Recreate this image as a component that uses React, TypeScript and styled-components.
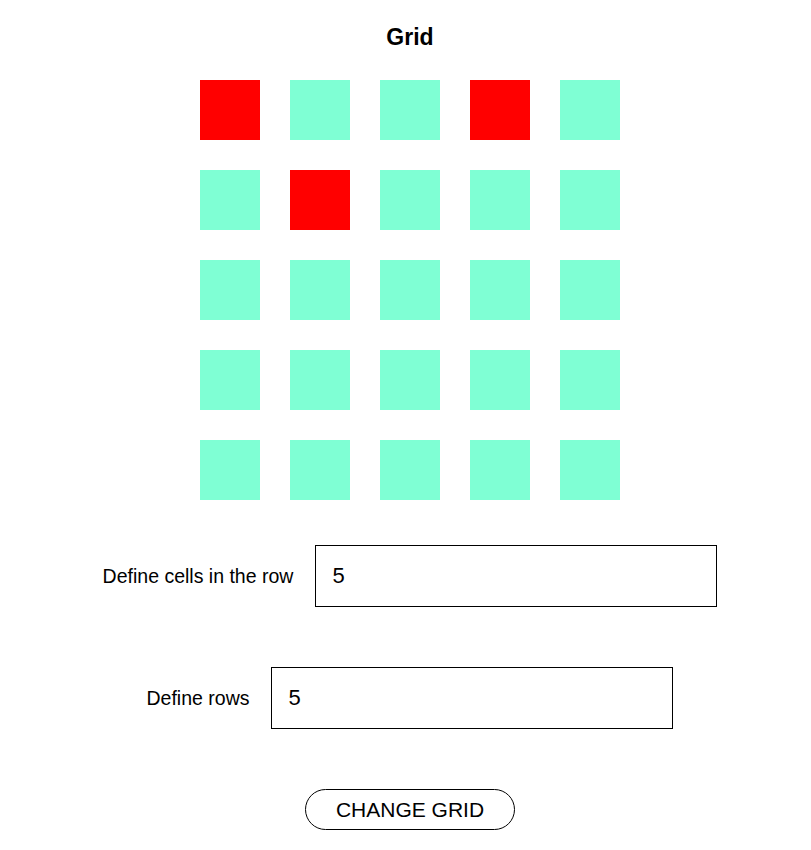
import React, { useState } from "react";
import styled, { createGlobalStyle } from "styled-components";

const Global = createGlobalStyle`
  html, body { margin: 0; padding: 0; background: #fff; }
  body { font-family: "Liberation Sans", Arial, sans-serif; color: #000; }
`;

const Page = styled.div`
  display: flex;
  flex-direction: column;
  align-items: center;
  padding: 24px 0 20px 9px;
  width: 811px;
  box-sizing: border-box;
`;

const Title = styled.h1`
  margin: 0;
  font-size: 23px;
  line-height: 26px;
  font-weight: 700;
`;

const Board = styled.div<{ $cols: number }>`
  display: grid;
  grid-template-columns: repeat(${(p) => p.$cols}, 60px);
  gap: 30px;
  margin-top: 30px;
`;

const Cell = styled.div<{ $on: boolean }>`
  width: 60px;
  height: 60px;
  background: ${(p) => (p.$on ? "#ff0000" : "#7fffd4")};
`;

const Field = styled.label<{ $first?: boolean }>`
  display: flex;
  align-items: center;
  gap: 22px;
  margin-top: ${(p) => (p.$first ? "45px" : "60px")};
  font-size: 19.5px;
`;

const Input = styled.input`
  width: 402px;
  height: 62px;
  box-sizing: border-box;
  border: 1px solid #000;
  border-radius: 0;
  padding: 0 0 0 16px;
  font-family: "Liberation Sans", Arial, sans-serif;
  font-size: 22px;
  color: #000;
  outline: none;
`;

const Button = styled.button`
  margin-top: 60px;
  width: 210px;
  height: 41px;
  box-sizing: border-box;
  border: 1px solid #000;
  border-radius: 21px;
  background: #fff;
  font-family: "Liberation Sans", Arial, sans-serif;
  font-size: 21px;
  color: #000;
  cursor: pointer;
`;

const red = new Set(["0-0", "0-3", "1-1"]);

export default function App() {
  const [cols, setCols] = useState("5");
  const [rows, setRows] = useState("5");
  const c = 5;
  const r = 5;
  const cells = [];
  for (let i = 0; i < r; i++) {
    for (let j = 0; j < c; j++) {
      cells.push(<Cell key={`${i}-${j}`} $on={red.has(`${i}-${j}`)} />);
    }
  }
  return (
    <>
      <Global />
      <Page>
        <Title>Grid</Title>
        <Board $cols={c}>{cells}</Board>
        <Field $first>
          Define cells in the row
          <Input value={cols} onChange={(e) => setCols(e.target.value)} />
        </Field>
        <Field>
          Define rows
          <Input value={rows} onChange={(e) => setRows(e.target.value)} />
        </Field>
        <Button>CHANGE GRID</Button>
      </Page>
    </>
  );
}
